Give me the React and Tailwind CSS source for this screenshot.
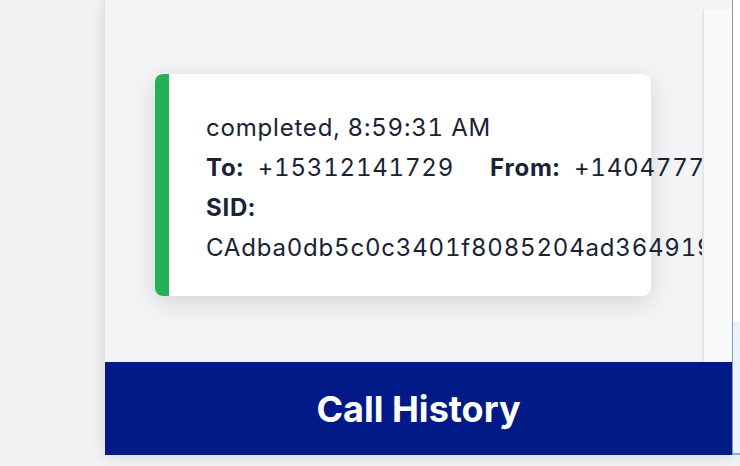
export default function App() {
  return (
    <div className="flex h-[466px] w-[740px] overflow-hidden bg-[#f2f2f4] pl-[105px] font-['Inter',sans-serif]">
      <div className="flex h-[455px] w-[627px] shrink-0 flex-col bg-[#f3f4f6] shadow-[0_0_14px_rgba(0,0,0,0.14)]">
        <div className="flex min-h-0 flex-1">
          <div className="min-w-0 flex-1 overflow-hidden pl-[50px] pt-[74px]">
            <div className="flex w-[496px] rounded-lg bg-white shadow-[0_6px_24px_rgba(0,0,0,0.13)]">
              <div className="w-[14px] shrink-0 rounded-l-lg bg-[#23b057]" />
              <div className="pb-[28px] pl-[37px] pt-[34px] text-[24px] leading-[40px] tracking-[0.8px] tabular-nums text-[#1a2234]">
                <p className="whitespace-nowrap">completed, 8:59:31 AM</p>
                <p className="flex whitespace-nowrap">
                  <span className="mr-[14px] font-bold">To:</span>
                  <span className="mr-[36px]">+15312141729</span>
                  <span className="mr-[14px] font-bold">From:</span>
                  <span>+14047775190</span>
                </p>
                <p className="font-bold">SID:</p>
                <p className="whitespace-nowrap">CAdba0db5c0c3401f8085204ad3649192e</p>
              </div>
            </div>
          </div>
          <div className="mt-[9px] w-[30px] shrink-0 border-l-2 border-[#e6e6e8] bg-[#fafafa]" />
        </div>
        <div className="flex h-[93px] shrink-0 items-center justify-center bg-[#021a87]">
          <h2 className="text-[36px] font-bold text-white">Call History</h2>
        </div>
      </div>
      <div className="h-[455px] w-[1px] shrink-0 bg-[#8d97aa]" />
      <div className="flex h-[455px] w-[7px] shrink-0 flex-col">
        <div className="flex-1 bg-white" />
        <div className="h-[133px] border-b-2 border-[#7fb0ee] bg-[#eaf2fd]" />
      </div>
    </div>
  )
}
